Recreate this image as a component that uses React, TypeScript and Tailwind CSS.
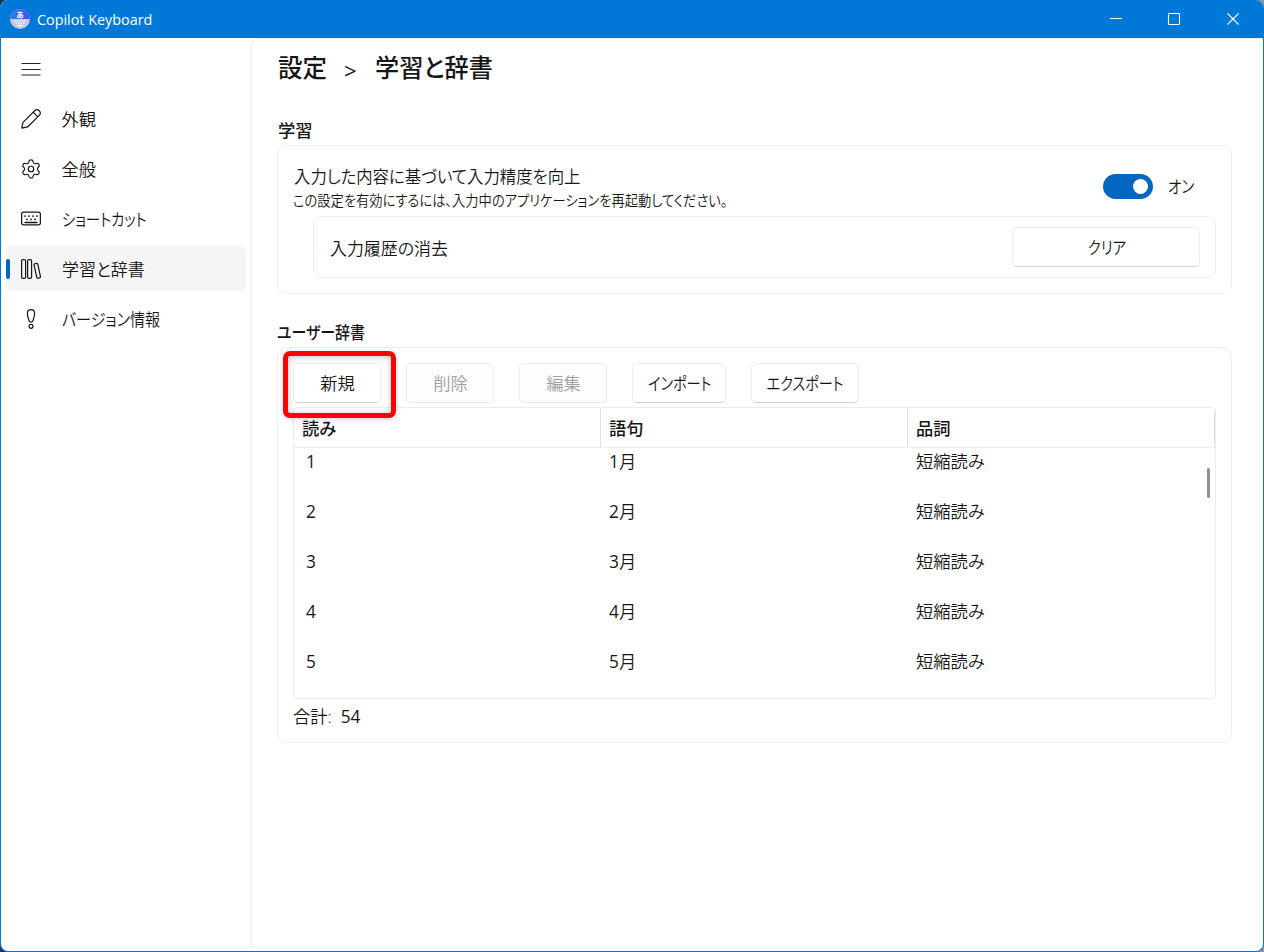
import React from "react";
import { Settings } from "lucide-react";
import clsx from "clsx";

type IconProps = { className?: string };

function PencilIcon({ className }: IconProps) {
  return (
    <svg viewBox="0 0 20 20" fill="none" stroke="currentColor" strokeWidth="1.2" strokeLinejoin="round" className={className}>
      <path d="M13.9 1.5a2.7 2.7 0 0 1 3.900 0l.7.7a2.700 2.700 0 0 1 0 3.900L7.100 17.500c-.4.4-.8.6-1.300.7L.8 19.200l1-5c.1-.5.3-.9.7-1.300zM12.200 3.200l4.600 4.600" />
    </svg>
  );
}

function KeyboardIcon({ className }: IconProps) {
  return (
    <svg viewBox="0 0 20 20" fill="none" stroke="currentColor" strokeWidth="1.3" className={className}>
      <rect x=".6" y="3.1" width="18.8" height="12.8" rx="2" />
      <path d="M4 13.5h12" strokeLinecap="round" />
      <g fill="currentColor" stroke="none">
        <circle cx="4" cy="7.1" r=".9" />
        <circle cx="8" cy="7.1" r=".9" />
        <circle cx="12" cy="7.1" r=".9" />
        <circle cx="16" cy="7.1" r=".9" />
        <circle cx="6" cy="10.4" r=".9" />
        <circle cx="10" cy="10.4" r=".9" />
        <circle cx="14" cy="10.4" r=".9" />
      </g>
    </svg>
  );
}

function BooksIcon({ className }: IconProps) {
  return (
    <svg viewBox="0 0 20 20" fill="none" stroke="currentColor" strokeWidth="1.2" className={className}>
      <rect x=".6" y=".6" width="4" height="18.8" rx="1.4" />
      <rect x="6.6" y=".6" width="4" height="18.8" rx="1.4" />
      <rect x="-1.9" y="-7.4" width="3.8" height="14.8" rx="1.4" transform="translate(16.3 11.8) rotate(-12)" />
    </svg>
  );
}

function ImportantIcon({ className }: IconProps) {
  return (
    <svg viewBox="0 0 20 20" fill="none" stroke="currentColor" strokeWidth="1.2" className={className}>
      <path d="M10 .6c2 0 3.6 1.6 3.6 3.7 0 2.4-.8 5.1-1.7 7.5-.3.9-1 1.4-1.9 1.4s-1.600-.5-1.900-1.400C7.200 9.400 6.400 6.700 6.400 4.300 6.400 2.200 8 .6 10 .6z" />
      <circle cx="10" cy="17.3" r="2" />
    </svg>
  );
}

function AppLogo() {
  return (
    <svg viewBox="0 0 20 20" className="size-5">
      <defs>
        <linearGradient id="logoTop" x1="0" x2="1">
          <stop offset="0" stopColor="#2f80f0" />
          <stop offset="1" stopColor="#4353dc" />
        </linearGradient>
      </defs>
      <circle cx="10" cy="10" r="10" fill="#c6c8dc" />
      <path d="M0 10a10 10 0 0 1 20 0z" fill="url(#logoTop)" />
      <text x="10" y="8.6" textAnchor="middle" fontSize="7.5" fontWeight="700" fill="#fff">
        あ
      </text>
      <path d="M4 12h12M5.5 14.2h9" stroke="#fff" strokeWidth="1.2" strokeDasharray="1.4 1.1" />
      <path d="M7 16.7h6" stroke="#fff" strokeWidth="1.2" />
    </svg>
  );
}

const navItems = [
  { label: "外観", icon: PencilIcon },
  { label: "全般", icon: Settings },
  { label: "ショートカット", icon: KeyboardIcon, fit: "scale-x-[0.83]" },
  { label: "学習と辞書", icon: BooksIcon, active: true, fit: "scale-x-[0.98]" },
  { label: "バージョン情報", icon: ImportantIcon, fit: "scale-x-[0.87]" },
];

const rows = [1, 2, 3, 4, 5];

function Fit({ className, children }: { className?: string; children: React.ReactNode }) {
  return <span className={clsx("inline-block whitespace-nowrap", className)}>{children}</span>;
}

function Button({ className, disabled, children }: { className?: string; disabled?: boolean; children: React.ReactNode }) {
  return (
    <button
      disabled={disabled}
      className={clsx(
        "flex h-10 shrink-0 items-center justify-center rounded-[5px] border border-[#ececec] pt-px pl-px",
        disabled ? "bg-[#fdfdfd] text-[#a0a0a0]" : "border-b-[#d0d0d0] bg-white",
        className
      )}
    >
      {children}
    </button>
  );
}

function TitleBar() {
  return (
    <header className="flex h-[38px] shrink-0 items-center bg-[#0078d7] pl-[9px] text-white">
      <AppLogo />
      <span className="ml-[7px] pt-0.5 text-[14.5px] font-normal">
        <Fit className="origin-left scale-x-[0.99]">Copilot Keyboard</Fit>
      </span>
      <svg viewBox="0 0 130 12" className="mr-[23px] ml-auto h-3 w-[130px]" fill="none" stroke="#fff" strokeWidth="1.1">
        <path d="M0 5.5h12" />
        <rect x="58.5" y=".5" width="11" height="11" rx="1" />
        <path d="M117.500.5l11 11M128.500.5l-11 11" />
      </svg>
    </header>
  );
}

function Sidebar() {
  return (
    <nav className="w-[250px] shrink-0 pt-2 pl-[5px]">
      <div className="flex h-[46px] items-center pl-[15px]">
        <svg viewBox="0 0 20 14" className="h-3.5 w-5" stroke="#222" strokeWidth="1.1">
          <path d="M.5 1.500h19M.5 7.500h19M.5 13h19" />
        </svg>
      </div>
      <ul className="mt-1 space-y-[5px]">
        {navItems.map(({ label, icon: Icon, active, fit }) => (
          <li
            key={label}
            className={clsx("flex h-[45px] w-[240px] items-center rounded-[5px]", active && "bg-[#f5f5f5]")}
          >
            <span className={clsx("h-5 w-1 rounded-full", active && "bg-[#0067c0]")} />
            <Icon
              className={clsx(
                "shrink-0",
                Icon === Settings ? "ml-2.5 size-[22px] stroke-[1.3]" : "ml-[11px] size-5"
              )}
            />
            <span className={clsx("pt-[3px]", Icon === Settings ? "ml-[19.5px]" : "ml-[20.5px]")}>
              <Fit className={clsx("origin-left", fit)}>{label}</Fit>
            </span>
          </li>
        ))}
      </ul>
    </nav>
  );
}

function LearningSection() {
  return (
    <section className="mt-[31px]">
      <h2 className="flex h-[30px] items-center pt-px pl-px leading-none font-medium">学習</h2>
      <div className="h-[149px] rounded-[10px] border border-[#eeeeee] px-[15px]">
        <div className="flex h-[70px] items-center pt-2.5">
          <div className="pt-1.5">
            <p className="h-6 pl-px leading-6">
              <Fit className="origin-left scale-x-[0.948]">入力した内容に基づいて入力精度を向上</Fit>
            </p>
            <p className="h-6 text-[14.5px] leading-6">
              <Fit className="origin-left scale-x-[0.915]">
                この設定を有効にするには、入力中のアプリケーションを再起動してください。
              </Fit>
            </p>
          </div>
          <div className="ml-auto flex h-[25px] w-[50px] items-center justify-end rounded-full bg-[#0067c0] pr-[5px]">
            <span className="size-[15px] rounded-full bg-white" />
          </div>
          <span className="ml-[15px] w-[48px] pt-0.5">
            <Fit className="origin-left scale-x-[0.84]">オン</Fit>
          </span>
        </div>
        <div className="ml-5 flex h-[62px] items-center rounded-lg border border-[#eeeeee] pr-[15px] pl-4">
          <Fit className="origin-left scale-x-[0.98] pt-[3px]">入力履歴の消去</Fit>
          <Button className="ml-auto w-[188px]">
            <Fit className="scale-x-[0.84]">クリア</Fit>
          </Button>
        </div>
      </div>
    </section>
  );
}

function WordTable() {
  return (
    <div className="mt-1 h-[292px] overflow-hidden rounded-[5px] border border-[#ececec]">
      <div className="grid h-10 grid-cols-[307px_307px_307px] items-center border-b border-[#ececec] font-medium">
        <span className="flex h-full items-center border-r border-[#e0e0e0] pt-[3px] pl-2">読み</span>
        <span className="flex h-full items-center border-r border-[#e0e0e0] pt-[3px] pl-2">語句</span>
        <span className="flex h-full items-center border-r border-[#e0e0e0] pt-[3px] pl-2">品詞</span>
      </div>
      <div className="relative">
        {rows.map((n) => (
          <div key={n} className="grid h-[50px] grid-cols-[307px_307px_307px] pt-px leading-[26px]">
            <span className="pl-3 font-normal">{n}</span>
            <span className="pl-2">
              <span className="font-normal">{n}</span>月
            </span>
            <span className="pl-2">短縮読み</span>
          </div>
        ))}
        <span className="absolute top-5 right-[5px] h-[30px] w-[3px] rounded-full bg-[#909090]" />
      </div>
    </div>
  );
}

function DictionarySection() {
  return (
    <section className="mt-[23px]">
      <h2 className="flex h-[30px] items-center pt-px leading-none font-medium">
        <Fit className="origin-left scale-x-[0.865]">ユーザー辞書</Fit>
      </h2>
      <div className="h-[396px] rounded-[10px] border border-[#eeeeee] px-[15px] pt-[15px]">
        <div className="flex gap-[25px]">
          <div className="relative">
            <Button className="w-[88px]">新規</Button>
            <span className="absolute -top-3 -left-2.5 h-[67px] w-[113px] rounded-[7px] border-5 border-[#fe0000] shadow-[0_1px_5px_rgba(0,0,0,0.2),inset_0_1px_6px_rgba(0,0,0,0.25)]" />
          </div>
          <Button className="w-[88px]" disabled>削除</Button>
          <Button className="w-[88px]" disabled>編集</Button>
          <Button className="w-[94px]">
            <Fit className="scale-x-[0.82]">インポート</Fit>
          </Button>
          <Button className="w-[108px]">
            <Fit className="scale-x-[0.82]">エクスポート</Fit>
          </Button>
        </div>
        <WordTable />
        <p className="mt-1.5 h-6 leading-6">
          合計:&nbsp; <span className="font-normal">54</span>
        </p>
      </div>
    </section>
  );
}

export default function App() {
  return (
    <div className="h-[952px] w-[1264px] bg-linear-to-r from-[#26305c] from-50% to-[#9292ad] to-50%">
      <div className="flex h-full flex-col overflow-hidden rounded-lg border border-t-0 border-[#0078d7] bg-white font-['Open_Sans','Noto_Sans_CJK_JP',sans-serif] text-[17.3px] font-[350] text-[#161616] [font-feature-settings:'palt']">
        <TitleBar />
        <div className="flex min-h-0 flex-1">
          <Sidebar />
          <main className="min-w-0 flex-1 rounded-tl-lg border-t border-l border-[#ededed] pr-[31px] pl-[25px]">
            <h1 className="flex h-[45px] items-center pt-[13px] pl-px text-[24.5px] font-medium whitespace-pre">
              <span>設定</span>
              <span className="mt-1 ml-[17px] text-[22px]">&gt;</span>
              <Fit className="ml-[18px] origin-left scale-x-[0.985]">学習と辞書</Fit>
            </h1>
            <LearningSection />
            <DictionarySection />
          </main>
        </div>
      </div>
    </div>
  );
}
